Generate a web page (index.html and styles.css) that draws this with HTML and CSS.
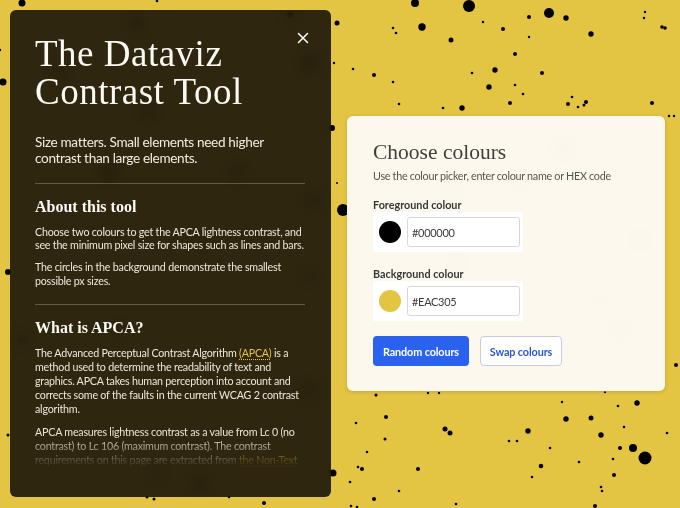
FILE: index.html
```html
<!DOCTYPE html>
<html lang="en">
<head>
<meta charset="utf-8">
<title>The Dataviz Contrast Tool</title>
<link rel="stylesheet" href="styles.css">
</head>
<body>
<svg class="dots" width="680" height="508" viewBox="0 0 680 508" aria-hidden="true">
  <g fill="#000">
    <!-- circles behind the info panel -->
    <circle cx="137" cy="23" r="4"/><circle cx="310" cy="63" r="5"/><circle cx="58" cy="72" r="4"/>
    <circle cx="148" cy="110" r="4"/><circle cx="110" cy="173" r="5"/><circle cx="237" cy="173" r="4"/>
    <circle cx="313" cy="200" r="4"/><circle cx="310" cy="277" r="3"/><circle cx="22" cy="340" r="3"/>
    <circle cx="200" cy="482" r="4"/><circle cx="157" cy="473" r="3"/><circle cx="310" cy="390" r="4"/>
    <circle cx="120" cy="330" r="3"/><circle cx="290" cy="15" r="3"/><circle cx="200" cy="240" r="3"/>
    <!-- circles behind the colour card -->
    <circle cx="562" cy="148" r="4"/><circle cx="520" cy="182" r="3"/><circle cx="450" cy="190" r="3"/>
    <circle cx="457" cy="265" r="3"/><circle cx="600" cy="300" r="2"/><circle cx="640" cy="240" r="3"/>
    <circle cx="380" cy="360" r="2"/><circle cx="620" cy="330" r="3"/>
    <!-- top -->
    <circle cx="22" cy="3" r="3.5"/><circle cx="157" cy="1" r="1.3"/>
    <circle cx="415" cy="3" r="4"/><circle cx="469" cy="6" r="6"/><circle cx="549" cy="13" r="5"/>
    <circle cx="529" cy="17" r="2"/><circle cx="566" cy="18" r="2.7"/><circle cx="337" cy="23" r="2.5"/>
    <circle cx="422" cy="27" r="3.7"/><circle cx="393" cy="28" r="1.3"/><circle cx="396" cy="33" r="1.3"/>
    <circle cx="483" cy="22" r="1.2"/><circle cx="503" cy="29" r="2"/><circle cx="591" cy="34" r="2.7"/>
    <circle cx="529" cy="37" r="1.2"/><circle cx="645" cy="12" r="1.2"/><circle cx="644" cy="18" r="1.2"/>
    <circle cx="662" cy="27" r="1.8"/><circle cx="665" cy="28" r="1.8"/><circle cx="451" cy="40" r="2.5"/>
    <circle cx="515" cy="54" r="2"/><circle cx="334" cy="63" r="1.2"/><circle cx="353" cy="69" r="1.3"/>
    <circle cx="374" cy="75" r="2"/><circle cx="495" cy="70" r="2.7"/><circle cx="472" cy="73" r="1.3"/>
    <circle cx="542" cy="73" r="2"/><circle cx="393" cy="82" r="1.3"/><circle cx="489" cy="87" r="2.7"/>
    <circle cx="515" cy="85" r="1.3"/><circle cx="523" cy="94" r="1.3"/><circle cx="572" cy="97" r="1.3"/>
    <circle cx="399" cy="104" r="1.3"/><circle cx="443" cy="108" r="1.3"/><circle cx="462" cy="108" r="2.7"/>
    <circle cx="510" cy="103" r="2"/><circle cx="568" cy="104" r="2"/><circle cx="578" cy="107" r="1.3"/>
    <circle cx="586" cy="102" r="2"/><circle cx="584" cy="105" r="1.5"/><circle cx="652" cy="103" r="2"/>
    <circle cx="669" cy="116" r="1.2"/><circle cx="674" cy="116" r="1.2"/><circle cx="332" cy="128" r="3"/>
    <!-- left edge and gutter -->
    <circle cx="0" cy="50" r="1.2"/><circle cx="3" cy="82" r="3.5"/><circle cx="8" cy="272" r="3"/>
    <circle cx="8" cy="435" r="1.5"/><circle cx="337" cy="183" r="1"/><circle cx="343" cy="210" r="6"/>
    <circle cx="676" cy="365" r="2"/>
    <!-- bottom -->
    <circle cx="376" cy="395" r="1.5"/><circle cx="428" cy="393" r="1.2"/><circle cx="439" cy="393" r="1.2"/>
    <circle cx="605" cy="392" r="1.2"/><circle cx="562" cy="402" r="1.2"/><circle cx="618" cy="406" r="1.3"/>
    <circle cx="637" cy="403" r="2.7"/><circle cx="386" cy="417" r="2"/><circle cx="356" cy="423" r="1.3"/>
    <circle cx="566" cy="419" r="2.7"/><circle cx="591" cy="418" r="2.5"/><circle cx="445" cy="429" r="2.5"/>
    <circle cx="450" cy="433" r="2.5"/><circle cx="528" cy="431" r="2.7"/><circle cx="624" cy="427" r="1.3"/>
    <circle cx="667" cy="433" r="1.3"/><circle cx="601" cy="435" r="2.7"/><circle cx="385" cy="439" r="1.5"/>
    <circle cx="509" cy="441" r="1.3"/><circle cx="517" cy="441" r="1.3"/><circle cx="633" cy="448" r="4"/>
    <circle cx="620" cy="448" r="2"/><circle cx="645" cy="458" r="6.5"/><circle cx="550" cy="448" r="1.3"/>
    <circle cx="367" cy="452" r="1.3"/><circle cx="579" cy="462" r="1.3"/><circle cx="613" cy="459" r="1.3"/>
    <circle cx="541" cy="466" r="2.3"/><circle cx="358" cy="467" r="1.3"/><circle cx="362" cy="469" r="2"/>
    <circle cx="418" cy="469" r="2"/><circle cx="614" cy="475" r="2"/><circle cx="333" cy="473" r="3.5"/>
    <circle cx="532" cy="477" r="1.3"/><circle cx="350" cy="482" r="1.3"/><circle cx="601" cy="487" r="1.3"/>
    <circle cx="602" cy="491" r="1.3"/><circle cx="399" cy="491" r="1.3"/><circle cx="374" cy="499" r="2"/>
    <circle cx="351" cy="506" r="1.3"/><circle cx="357" cy="507" r="1.3"/><circle cx="456" cy="504" r="1.3"/>
    <circle cx="595" cy="506" r="2"/><circle cx="147" cy="497" r="1.5"/><circle cx="154" cy="499" r="1.5"/>
    <circle cx="229" cy="497" r="1.3"/><circle cx="264" cy="503" r="2"/>
  </g>
</svg>

<div class="page">
  <aside class="panel">
    <header class="panel-head">
      <h1 class="title">The Dataviz Contrast Tool</h1>
      <button class="close" type="button" aria-label="Close">
        <svg width="12" height="12" viewBox="0 0 12 12"><path d="M1.5 1.5 10.5 10.5M10.5 1.5 1.5 10.5" stroke="#fff" stroke-width="1.5" stroke-linecap="round"/></svg>
      </button>
    </header>
    <div class="panel-body">
      <p class="lead">Size matters. Small elements need higher contrast than large elements.</p>
      <hr class="rule">
      <section>
        <h2 class="section-title">About this tool</h2>
        <p class="text">Choose two colours to get the APCA lightness contrast, and see the minimum pixel size for shapes such as lines and bars.</p>
        <p class="text">The circles in the background demonstrate the smallest possible px sizes.</p>
      </section>
      <hr class="rule">
      <section>
        <h2 class="section-title">What is APCA?</h2>
        <p class="text text-loose">The Advanced Perceptual Contrast Algorithm <a class="link link-dotted" href="#">(APCA)</a> is a method used to determine the readability of text and graphics. APCA takes human perception into account and corrects some of the faults in the current WCAG 2 contrast algorithm.</p>
        <p class="text text-loose">APCA measures lightness contrast as a value from Lc 0 (no contrast) to Lc 106 (maximum contrast). The contrast requirements on this page are extracted from <a class="link" href="#">the Non-Text</a> Contrast guidelines of the APCA Readability Criterion.</p>
      </section>
    </div>
  </aside>

  <main class="stage">
    <section class="card">
      <h2 class="card-title">Choose colours</h2>
      <p class="card-sub">Use the colour picker, enter colour name or HEX code</p>
      <label class="field-label">Foreground colour</label>
      <div class="picker">
        <span class="swatch swatch-fg"></span>
        <input class="hex" type="text" value="#000000">
      </div>
      <label class="field-label field-label-next">Background colour</label>
      <div class="picker">
        <span class="swatch swatch-bg"></span>
        <input class="hex" type="text" value="#EAC305">
      </div>
      <div class="actions">
        <button class="btn btn-primary" type="button">Random colours</button>
        <button class="btn btn-secondary" type="button">Swap colours</button>
      </div>
    </section>
  </main>
</div>
</body>
</html>
```
FILE: styles.css
```css
html, body {
  margin: 0;
  padding: 0;
}

body {
  width: 680px;
  height: 508px;
  position: relative;
  overflow: hidden;
  background: #e4c443;
  font-family: Lato, "Liberation Sans", sans-serif;
}

/* scattered circles drawn across the whole canvas */
.dots {
  position: absolute;
  left: 0;
  top: 0;
}

.page {
  position: relative;
  box-sizing: border-box;
  height: 508px;
  display: flex;
  align-items: center;
  gap: 16px;
  padding: 10px 15px 11px 10px;
}

/* ---------- info panel ---------- */
.panel {
  box-sizing: border-box;
  width: 321px;
  flex: none;
  align-self: stretch;
  display: flex;
  flex-direction: column;
  padding: 25px 26px 0 25px;
  border-radius: 6px;
  background: rgba(16, 12, 6, 0.86);
  -webkit-backdrop-filter: blur(8px);
  backdrop-filter: blur(8px);
  color: #ebe7db;
  overflow: hidden;
}

.panel-head {
  display: flex;
  justify-content: space-between;
  align-items: flex-start;
}

.title {
  margin: 0;
  font-family: "Liberation Serif", serif;
  font-weight: 400;
  font-size: 37px;
  line-height: 38px;
  letter-spacing: 0.5px;
  color: #fbf9f3;
  width: 234px;
}

.close {
  flex: none;
  margin: -3px -4px 0 0;
  padding: 0;
  width: 12px;
  height: 12px;
  border: 0;
  background: none;
  display: flex;
}

.panel-body {
  flex: 1;
  min-height: 0;
  overflow: hidden;
  -webkit-mask-image: linear-gradient(#000 0, #000 calc(100% - 64px), transparent calc(100% - 29px));
  mask-image: linear-gradient(#000 0, #000 calc(100% - 64px), transparent calc(100% - 29px));
}

.lead {
  margin: 22.5px 0 0;
  font-size: 13.6px;
  line-height: 16.5px;
  letter-spacing: -0.35px;
  color: #f0ece1;
}

.rule {
  margin: 16px 0 0;
  border: 0;
  height: 1px;
  background: #5f5947;
}

.section-title {
  margin: 13px 0 0;
  font-family: "Liberation Serif", serif;
  font-weight: 700;
  font-size: 16px;
  line-height: 20px;
  color: #fbf9f3;
}

.text {
  margin: 8.5px 0 0;
  font-size: 10.7px;
  line-height: 13.5px;
  letter-spacing: -0.22px;
  color: #ebe7db;
}

.text-loose {
  line-height: 14px;
}

.section-title + .text {
  margin-top: 8px;
}

.link {
  color: #e4c443;
  text-decoration: underline;
  text-underline-offset: 2px;
}

.link-dotted {
  text-decoration-style: dotted;
}

section + .rule {
  margin-top: 17px;
}

/* ---------- colour card ---------- */
.stage {
  flex: none;
  display: flex;
  align-items: center;
}

.card {
  box-sizing: border-box;
  width: 318px;
  padding: 23px 26px 25px;
  border-radius: 6px;
  background: rgba(254, 251, 248, 0.94);
  -webkit-backdrop-filter: blur(8px);
  backdrop-filter: blur(8px);
  box-shadow: 0 1px 4px rgba(60, 45, 0, 0.18);
  display: flex;
  flex-direction: column;
  align-items: flex-start;
}

.card-title {
  margin: 0;
  font-family: "Liberation Serif", serif;
  font-weight: 400;
  font-size: 21.5px;
  line-height: 26px;
  color: #42403e;
}

.card-sub {
  margin: 4px 0 0;
  font-size: 10.8px;
  line-height: 14px;
  letter-spacing: -0.3px;
  color: #57554f;
}

.field-label {
  display: block;
  margin: 15px 0 1.5px;
  font-size: 10.8px;
  line-height: 13px;
  font-weight: 700;
  color: #3a3835;
}

.field-label-next {
  margin-top: 14.5px;
}

.picker {
  box-sizing: border-box;
  width: 150px;
  height: 40px;
  display: flex;
  align-items: center;
  gap: 6px;
  padding: 5px 3px 5px 6px;
  background: #fff;
}

.swatch {
  flex: none;
  width: 22px;
  height: 22px;
  border-radius: 50%;
}

.swatch-fg {
  background: #000;
}

.swatch-bg {
  background: #e4c443;
}

.hex {
  box-sizing: border-box;
  width: 113px;
  height: 30px;
  margin: 0;
  padding: 0 0 0 4px;
  border: 1px solid #d9d8d5;
  border-radius: 3px;
  background: #fff;
  font-family: Lato, "Liberation Sans", sans-serif;
  font-size: 11px;
  letter-spacing: -0.3px;
  color: #3b3a38;
  outline: none;
}

.actions {
  display: flex;
  gap: 11px;
  margin-top: 15px;
}

.btn {
  box-sizing: border-box;
  height: 30px;
  padding: 0;
  border-radius: 4px;
  font-family: Lato, "Liberation Sans", sans-serif;
  font-weight: 700;
  font-size: 10.8px;
  letter-spacing: -0.1px;
  cursor: pointer;
}

.btn-primary {
  width: 96px;
  border: 0;
  background: #2a62ef;
  color: #fff;
}

.btn-secondary {
  width: 82px;
  border: 1px solid #c9cbdc;
  background: #fff;
  color: #2d56d6;
}
```
